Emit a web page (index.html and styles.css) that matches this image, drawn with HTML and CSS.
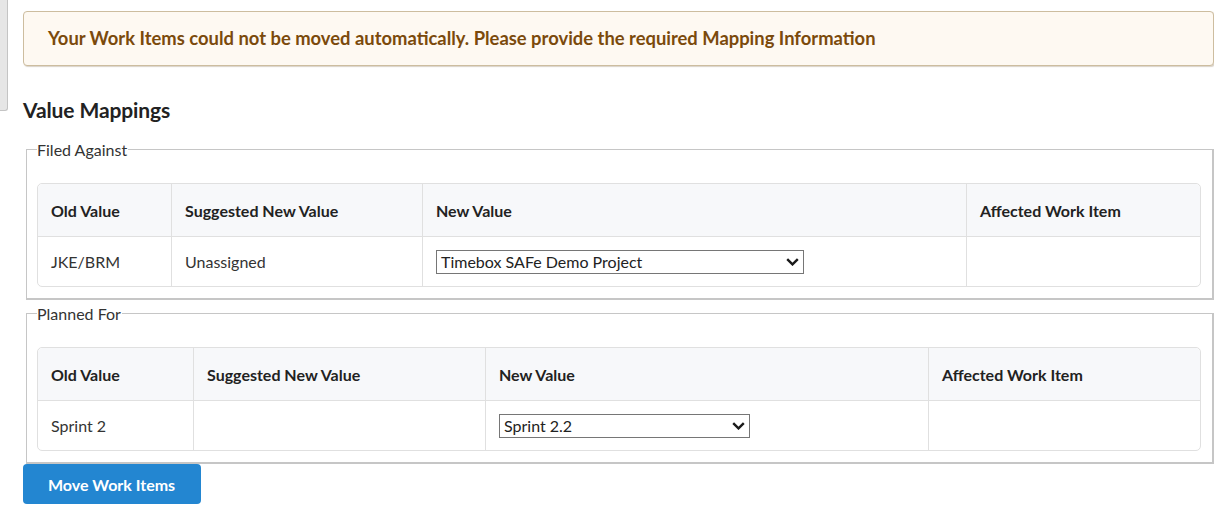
FILE: index.html
```html
<!DOCTYPE html>
<html lang="en">
<head>
<meta charset="utf-8">
<title>Value Mappings</title>
<link rel="stylesheet" href="styles.css">
</head>
<body>
<div class="page">
  <div class="side-strip"></div>
  <main class="main">
    <div class="alert">Your Work Items could not be moved automatically. Please provide the required Mapping Information</div>
    <h2 class="title">Value Mappings</h2>

    <fieldset class="group">
      <legend class="legend">Filed Against</legend>
      <table class="map-table t1">
        <thead>
          <tr>
            <th class="c1">Old Value</th>
            <th class="c2">Suggested New Value</th>
            <th class="c3">New Value</th>
            <th class="c4">Affected Work Item</th>
          </tr>
        </thead>
        <tbody>
          <tr>
            <td>JKE/BRM</td>
            <td>Unassigned</td>
            <td>
              <div class="select s1">
                <span class="select-text">Timebox SAFe Demo Project</span>
                <svg class="chev" width="13" height="8" viewBox="0 0 13 8"><path d="M1.2 1.2 L6.5 6.4 L11.8 1.2" fill="none" stroke="#1a1a1a" stroke-width="2.4"/></svg>
              </div>
            </td>
            <td></td>
          </tr>
        </tbody>
      </table>
    </fieldset>

    <fieldset class="group g2">
      <legend class="legend">Planned For</legend>
      <table class="map-table t2">
        <thead>
          <tr>
            <th class="c1">Old Value</th>
            <th class="c2">Suggested New Value</th>
            <th class="c3">New Value</th>
            <th class="c4">Affected Work Item</th>
          </tr>
        </thead>
        <tbody>
          <tr>
            <td>Sprint 2</td>
            <td></td>
            <td>
              <div class="select s2">
                <span class="select-text">Sprint 2.2</span>
                <svg class="chev" width="13" height="8" viewBox="0 0 13 8"><path d="M1.2 1.2 L6.5 6.4 L11.8 1.2" fill="none" stroke="#1a1a1a" stroke-width="2.4"/></svg>
              </div>
            </td>
            <td></td>
          </tr>
        </tbody>
      </table>
    </fieldset>

    <button class="btn" type="button">Move Work Items</button>
  </main>
</div>
</body>
</html>
```

FILE: styles.css
```css
* { box-sizing: border-box; }
html, body { margin: 0; padding: 0; background: #fff; }
body {
  font-family: Lato, "Open Sans", "Liberation Sans", sans-serif;
  color: #333;
  font-size: 16px;
  width: 1214px;
  height: 521px;
  overflow: hidden;
}
.page {
  display: flex;
  align-items: flex-start;
}
.side-strip {
  width: 8px;
  height: 111px;
  flex: none;
  background: #e6e6e6;
  border-right: 1px solid #c4c4c4;
  border-bottom: 1px solid #c4c4c4;
  border-bottom-right-radius: 3px;
}
.main {
  flex: 1;
  margin-left: 15px;
  padding-top: 11px;
}
.alert {
  height: 55px;
  border: 1px solid #cdbd9f;
  border-radius: 4px;
  background: #fef9f2;
  color: #7b4a0c;
  font-weight: 700;
  font-size: 18.4px;
  line-height: 53px;
  padding-left: 24px;
  box-shadow: 1px 1px 1px rgba(150,130,100,0.35);
}
.title {
  margin: 31px 0 0 0;
  font-size: 21px;
  font-weight: 700;
  color: #222;
  line-height: 26px;
  letter-spacing: -0.1px;
}
.group {
  margin: 17px 0 0 3px;
  padding: 0 11px 11px 10px;
  border: 1px solid #c6c6c6;
  border-right-width: 2px;
  border-bottom-width: 2px;
  min-width: 0;
}
.g2 { margin-top: 4px; }
.legend {
  padding: 0 1px 0 0;
  margin-left: 0;
  font-size: 16px;
  line-height: 19px;
  color: #333;
}
.map-table {
  margin-top: 24px;
  width: 100%;
  border-collapse: separate;
  border-spacing: 0;
  border: 1px solid #e0e0e0;
  border-radius: 5px;
  table-layout: fixed;
}
.map-table th {
  background: #f7f8fa;
  height: 53px;
  text-align: left;
  font-weight: 700;
  color: #222;
  padding: 0 13px;
  border-bottom: 1px solid #e0e0e0;
  border-left: 1px solid #e0e0e0;
}
.map-table th:first-child { border-top-left-radius: 5px; border-left: 0; }
.map-table th:last-child { border-top-right-radius: 5px; }
.map-table td {
  height: 49px;
  padding: 0 13px;
  border-left: 1px solid #e0e0e0;
  color: #333;
}
.map-table td:first-child { border-left: 0; }
.t1 .c1 { width: 133px; }
.t1 .c2 { width: 251px; }
.t1 .c3 { width: 544px; }
.t2 .c1 { width: 155px; }
.t2 .c2 { width: 292px; }
.t2 .c3 { width: 443px; }
.select {
  position: relative;
  height: 24px;
  border: 1px solid #767676;
  background: #fff;
  display: flex;
  align-items: center;
  padding-left: 4px;
  color: #222;
  font-size: 16px;
}
.s1 { width: 368px; }
.s2 { width: 251px; }
.chev {
  position: absolute;
  right: 4px;
  top: 7px;
}
.btn {
  display: block;
  margin-top: 0;
  width: 178px;
  height: 40px;
  border: 0;
  border-radius: 4px;
  background: #2386d1;
  color: #fff;
  font-family: Lato, "Open Sans", "Liberation Sans", sans-serif;
  font-weight: 700;
  font-size: 16px;
  text-align: left;
  padding-left: 25px;
}
```
